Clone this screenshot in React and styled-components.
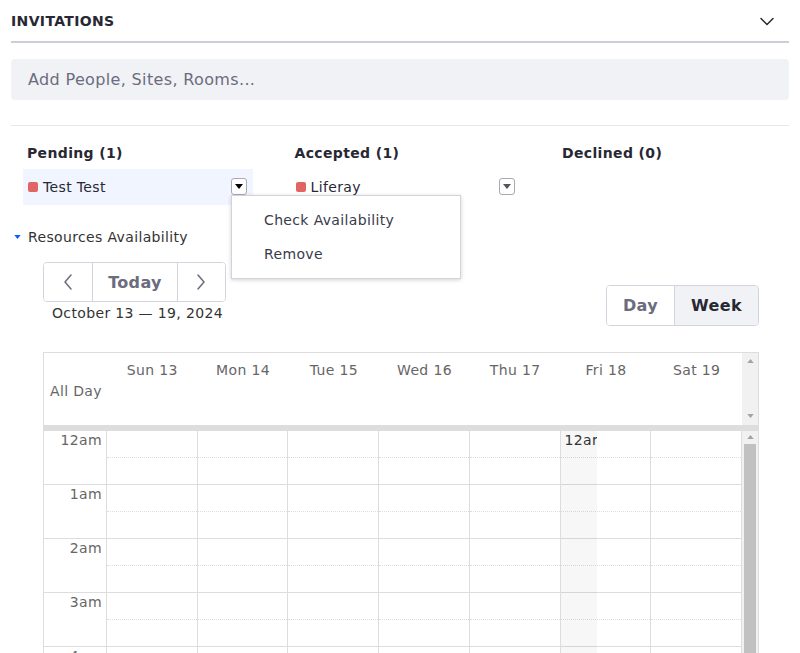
import React from 'react';
import styled, { createGlobalStyle } from 'styled-components';

const GlobalStyle = createGlobalStyle`
  html, body { margin: 0; padding: 0; background: #fff; overflow: hidden; }
  body {
    font-family: "DejaVu Sans", "Noto Sans", sans-serif;
    color: #272833;
    letter-spacing: 0.022em;
  }
  input, button { letter-spacing: inherit; }
  * { box-sizing: border-box; }
`;

const Page = styled.div`
  width: 800px;
  height: 653px;
  overflow: hidden;
  padding: 0 11px;
`;

const SectionHeader = styled.div`
  height: 43px;
  display: flex;
  align-items: center;
  justify-content: space-between;
  border-bottom: 2px solid #cdced9;
`;

const SectionTitle = styled.span`
  font-size: 14px;
  font-weight: 700;
  color: #272833;
`;

const Collapse = styled.span`
  display: flex;
  margin-right: 15px;
  color: #272833;
`;

const SearchInput = styled.input`
  display: block;
  width: 100%;
  height: 41px;
  margin-top: 16px;
  border: none;
  border-radius: 4px;
  background: #f1f2f5;
  padding: 0 17px;
  font-family: inherit;
  font-size: 16px;
  color: #272833;
  outline: none;
  &::placeholder { color: #6b6c7e; opacity: 1; }
`;

const Divider = styled.div`
  margin-top: 25px;
  border-top: 1px solid #e7e7ed;
`;

const Participants = styled.div`
  display: grid;
  grid-template-columns: repeat(3, 267.5px);
  margin: 17px 0 0 12px;
`;

const ColumnTitle = styled.div`
  font-size: 14px;
  font-weight: 700;
  line-height: 20px;
  padding-left: 4px;
  margin-bottom: 6px;
  color: #272833;
`;

const Attendee = styled.div`
  width: 230px;
  height: 36px;
  display: flex;
  align-items: center;
  padding: 0 6px 0 5px;
  background: ${p => (p.$active ? '#f0f5ff' : 'transparent')};
  font-size: 14px;
  color: #272833;
`;

const Swatch = styled.span`
  width: 10px;
  height: 10px;
  border-radius: 2px;
  background: #e06565;
  margin-right: 5px;
  flex: none;
`;

const ToggleWrap = styled.div`
  position: relative;
  margin-left: auto;
  margin-top: -1px;
`;

const MenuToggle = styled.button`
  width: 16px;
  height: 17px;
  padding: 0;
  border: 1px solid #a9a9b2;
  border-radius: 3px;
  background: #fff;
  display: flex;
  align-items: center;
  justify-content: center;
`;

const Menu = styled.div`
  position: absolute;
  top: 100%;
  left: 0;
  width: 230px;
  padding: 7px 0;
  background: #fff;
  border: 1px solid #d3d3d9;
  box-shadow: 0 1px 4px rgba(0, 0, 0, 0.18);
  z-index: 10;
`;

const MenuItem = styled.div`
  height: 34px;
  line-height: 34px;
  padding-left: 32px;
  font-size: 14px;
  color: #393a4a;
`;

const ResourcesToggle = styled.div`
  display: flex;
  align-items: center;
  margin-top: 22px;
  padding-left: 3px;
  line-height: 20px;
  font-size: 14px;
  color: #333;
  gap: 7px;
`;

const Toolbar = styled.div`
  display: flex;
  justify-content: space-between;
  align-items: flex-start;
  width: 716px;
  margin: 15px 0 0 32px;
`;

const NavColumn = styled.div`
  display: flex;
  flex-direction: column;
  width: 183px;
`;

const ButtonGroup = styled.div`
  display: flex;
  height: ${p => p.$h}px;
  margin-top: ${p => p.$mt || 0}px;
  border: 1px solid #d3d4dd;
  border-radius: 4px;
  overflow: hidden;
`;

const GroupButton = styled.button`
  width: ${p => p.$w}px;
  height: 100%;
  padding: 0;
  border: none;
  border-left: ${p => (p.$first ? 'none' : '1px solid #d3d4dd')};
  background: ${p => (p.$active ? '#f1f2f5' : '#fff')};
  color: ${p => (p.$active ? '#272833' : '#6b6c7e')};
  font-family: inherit;
  font-size: 16px;
  font-weight: 700;
  display: flex;
  align-items: center;
  justify-content: center;
`;

const DateRange = styled.div`
  margin-top: 1px;
  padding-left: 9px;
  font-size: 14px;
  line-height: 20px;
  color: #333;
  white-space: nowrap;
`;

const Calendar = styled.div`
  width: 716px;
  margin: 26px 0 0 32px;
  border: 1px solid #ddd;
  border-bottom: none;
`;

const CalHeader = styled.div`
  display: grid;
  grid-template-columns: 63px repeat(7, 1fr) 16px;
  height: 78px;
  border-bottom: 6px solid #ddd;
`;

const AllDay = styled.div`
  padding: 28px 0 0 6px;
  font-size: 14px;
  line-height: 20px;
  color: #666;
`;

const DayLabel = styled.div`
  padding-top: 7px;
  text-align: center;
  font-size: 14px;
  line-height: 20px;
  color: #666;
  white-space: nowrap;
`;

const ScrollTrack = styled.div`
  background: #f1f1f1;
  display: flex;
  flex-direction: column;
  align-items: center;
  justify-content: ${p => (p.$split ? 'space-between' : 'flex-start')};
  padding: ${p => (p.$split ? '6px 0 7px' : '4px 0 0')};
`;

const Thumb = styled.div`
  width: 12px;
  height: 400px;
  margin-top: 5px;
  background: #c1c1c1;
`;

const CalBody = styled.div`
  display: grid;
  grid-template-columns: 63px repeat(7, 1fr) 16px;
`;

const Gutter = styled.div`
  border-right: 1px solid #ddd;
`;

const HourLabel = styled.div`
  height: 54px;
  border-bottom: 1px solid #ddd;
  text-align: right;
  padding-right: 4px;
  font-size: 14px;
  line-height: 18px;
  color: #666;
`;

const DayColumn = styled.div`
  position: relative;
  border-right: 1px solid #ddd;
`;

const HalfSlot = styled.div`
  height: 27px;
  border-bottom: 1px ${p => (p.$half ? 'dotted' : 'solid')} #ddd;
`;

const NowStrip = styled.div`
  position: absolute;
  top: 0;
  left: 0;
  bottom: 0;
  width: 36px;
  overflow: hidden;
  white-space: nowrap;
  padding-left: 4px;
  background: rgba(0, 0, 0, 0.03);
  font-size: 14px;
  line-height: 18px;
  color: #333;
`;

const ChevronDown = () => (
  <svg width="14" height="14" viewBox="0 0 14 14" fill="none">
    <path d="M1 4.5 L7 10.5 L13 4.5" stroke="currentColor" strokeWidth="1.5" strokeLinecap="round" strokeLinejoin="round" />
  </svg>
);

const Caret = ({ color = '#000', w = 8, h = 5 }) => (
  <svg width={w} height={h} viewBox="0 0 8 5">
    <path d="M0 0 H8 L4 5 Z" fill={color} />
  </svg>
);

const CaretUp = () => (
  <svg width="7" height="4" viewBox="0 0 8 5">
    <path d="M0 5 H8 L4 0 Z" fill="#a3a3a3" />
  </svg>
);

const ChevronSide = ({ dir }) => (
  <svg width="10" height="16" viewBox="0 0 10 16" fill="none">
    <path
      d={dir === 'left' ? 'M8 1 L2 8 L8 15' : 'M2 1 L8 8 L2 15'}
      stroke="#6b6c7e"
      strokeWidth="1.5"
      strokeLinecap="round"
      strokeLinejoin="round"
    />
  </svg>
);

const days = ['Sun 13', 'Mon 14', 'Tue 15', 'Wed 16', 'Thu 17', 'Fri 18', 'Sat 19'];
const hours = ['12am', '1am', '2am', '3am', '4am'];

export default function App() {
  return (
    <>
      <GlobalStyle />
      <Page>
        <SectionHeader>
          <SectionTitle>INVITATIONS</SectionTitle>
          <Collapse><ChevronDown /></Collapse>
        </SectionHeader>
        <SearchInput placeholder="Add People, Sites, Rooms..." />
        <Divider />
        <Participants>
          <div>
            <ColumnTitle>Pending (1)</ColumnTitle>
            <Attendee $active>
              <Swatch />
              Test Test
              <ToggleWrap>
                <MenuToggle><Caret /></MenuToggle>
                <Menu>
                  <MenuItem>Check Availability</MenuItem>
                  <MenuItem>Remove</MenuItem>
                </Menu>
              </ToggleWrap>
            </Attendee>
          </div>
          <div>
            <ColumnTitle>Accepted (1)</ColumnTitle>
            <Attendee>
              <Swatch />
              Liferay
              <ToggleWrap>
                <MenuToggle><Caret color="#555" /></MenuToggle>
              </ToggleWrap>
            </Attendee>
          </div>
          <div>
            <ColumnTitle>Declined (0)</ColumnTitle>
          </div>
        </Participants>
        <ResourcesToggle>
          <Caret color="#0b5fff" w={7} h={4} />
          Resources Availability
        </ResourcesToggle>
        <Toolbar>
          <NavColumn>
            <ButtonGroup $h={40}>
              <GroupButton $first $w={49}><ChevronSide dir="left" /></GroupButton>
              <GroupButton $w={85}>Today</GroupButton>
              <GroupButton $w={49}><ChevronSide dir="right" /></GroupButton>
            </ButtonGroup>
            <DateRange>October 13 — 19, 2024</DateRange>
          </NavColumn>
          <ButtonGroup $h={41} $mt={23}>
            <GroupButton $first $w={67}>Day</GroupButton>
            <GroupButton $w={84} $active>Week</GroupButton>
          </ButtonGroup>
        </Toolbar>
        <Calendar>
          <CalHeader>
            <AllDay>All Day</AllDay>
            {days.map(d => <DayLabel key={d}>{d}</DayLabel>)}
            <ScrollTrack $split>
              <CaretUp />
              <Caret color="#a3a3a3" w={7} h={4} />
            </ScrollTrack>
          </CalHeader>
          <CalBody>
            <Gutter>
              {hours.map(h => <HourLabel key={h}>{h}</HourLabel>)}
            </Gutter>
            {days.map((d, i) => (
              <DayColumn key={d}>
                {hours.map(h => (
                  <React.Fragment key={h}>
                    <HalfSlot $half />
                    <HalfSlot />
                  </React.Fragment>
                ))}
                {i === 5 && <NowStrip>12am</NowStrip>}
              </DayColumn>
            ))}
            <ScrollTrack>
              <CaretUp />
              <Thumb />
            </ScrollTrack>
          </CalBody>
        </Calendar>
      </Page>
    </>
  );
}
